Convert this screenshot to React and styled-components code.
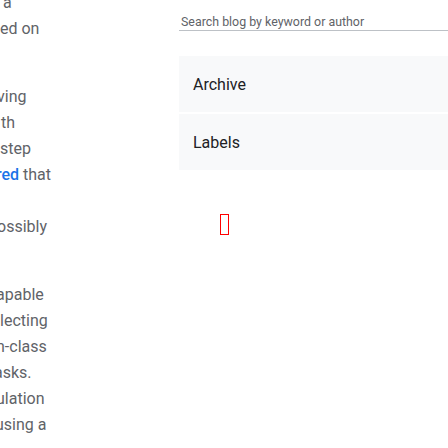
import React from 'react';
import styled, { createGlobalStyle } from 'styled-components';

const paragraphs = [
  [{ text: 'a', shift: 3 }, { text: 'ed on', shift: 0 }, { text: '', shift: 0 }],
  [
    { text: 'ving', shift: -3 },
    { text: 'th', shift: 1 },
    { text: 'step', shift: 0 },
    { text: 'red', link: true, rest: ' that', shift: -4 },
    { text: '', shift: 0 },
    { text: 'ossibly', shift: -3 },
    { text: '', shift: 0 },
  ],
  [
    { text: 'apable', shift: -4 },
    { text: 'lecting', shift: 0 },
    { text: 'n-class', shift: -4 },
    { text: 'asks.', shift: -6 },
    { text: 'ulation', shift: -4 },
    { text: 'using a', shift: -5 },
  ],
];

const App = () => {
  return (
    <>
      <GlobalStyle />
      <Page>
        <Article>
          {paragraphs.map((lines, i) => (
            <Paragraph key={i}>
              {lines.map((line, j) => (
                <Line key={j} $shift={line.shift}>
                  {line.link ? <Link>{line.text}</Link> : line.text || '\u00a0'}
                  {line.rest}
                </Line>
              ))}
            </Paragraph>
          ))}
        </Article>

        <Sidebar>
          <Search placeholder='Search blog by keyword or author' />
          <Widgets>
            <Widget>Archive</Widget>
            <Widget>Labels</Widget>
          </Widgets>
          <FocusMark />
        </Sidebar>
      </Page>
    </>
  );
};

const GlobalStyle = createGlobalStyle`
  html, body {
    margin: 0;
    background: #ffffff;
    overflow: hidden;
  }
  body {
    font-family: Roboto, 'Liberation Sans', sans-serif;
  }
`;

const Page = styled.div`
  display: grid;
  grid-template-columns: 179px 320px;
  height: 448px;
  overflow: hidden;
`;

const Article = styled.div`
  width: 70px;
  margin-top: -10px;
  overflow: hidden;
  font-size: 16px;
  line-height: 26px;
  color: #5f6368;
`;

const Paragraph = styled.div`
  margin-bottom: 16px;
`;

const Line = styled.div`
  white-space: nowrap;
  margin-left: ${(p) => p.$shift}px;
`;

const Link = styled.span`
  color: #1a73e8;
  font-weight: 500;
`;

const Sidebar = styled.aside`
  display: flex;
  flex-direction: column;
  padding-top: 14px;
`;

const Search = styled.input`
  box-sizing: border-box;
  width: 100%;
  height: 17px;
  padding: 0 0 1px 2px;
  border: none;
  border-bottom: 1px solid #bdc1c6;
  outline: none;
  background: transparent;
  font-family: Roboto, 'Liberation Sans', sans-serif;
  font-size: 12.4px;
  color: #202124;

  &::placeholder {
    color: #5f6368;
  }
`;

const Widgets = styled.div`
  display: flex;
  flex-direction: column;
  gap: 2px;
  margin-top: 25px;
`;

const Widget = styled.div`
  display: flex;
  align-items: center;
  height: 56px;
  padding-left: 14px;
  background: #f8f9fa;
  font-size: 16px;
  color: #202124;
`;

const FocusMark = styled.div`
  box-sizing: border-box;
  width: 9px;
  height: 21px;
  margin: 44px 0 0 41px;
  border: 1px solid #ff0000;
`;

export default App;
